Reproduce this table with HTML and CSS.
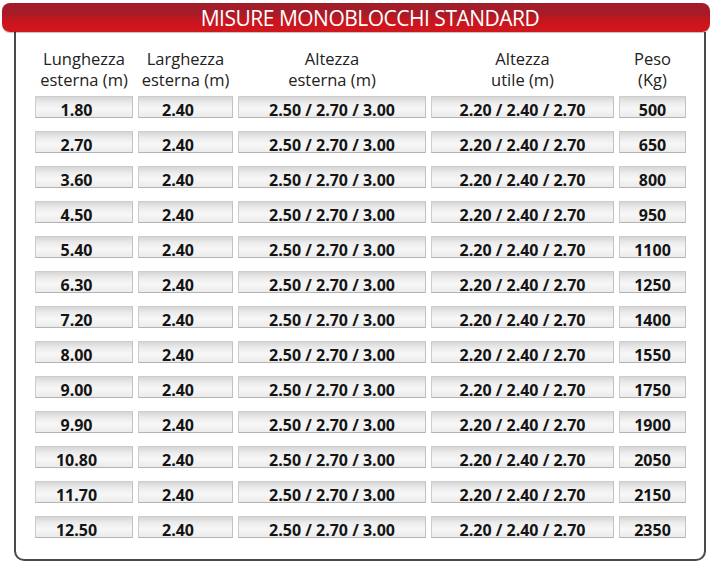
FILE: index.html
```html
<!DOCTYPE html>
<html lang="it">
<head>
<meta charset="utf-8">
<title>Misure monoblocchi standard</title>
<link rel="stylesheet" href="styles.css">
</head>
<body>
<div class="page">
  <div class="title">MISURE MONOBLOCCHI STANDARD</div>
  <div class="box">
    <div class="cols head">
      <div class="h">Lunghezza<br>esterna (m)</div>
      <div class="h">Larghezza<br>esterna (m)</div>
      <div class="h">Altezza<br>esterna (m)</div>
      <div class="h">Altezza<br>utile (m)</div>
      <div class="h">Peso<br>(Kg)</div>
    </div>
    <div class="cols rows">
      <div class="c c1">1.80</div><div class="c c2">2.40</div><div class="c">2.50 / 2.70 / 3.00</div><div class="c">2.20 / 2.40 / 2.70</div><div class="c">500</div>
      <div class="c c1">2.70</div><div class="c c2">2.40</div><div class="c">2.50 / 2.70 / 3.00</div><div class="c">2.20 / 2.40 / 2.70</div><div class="c">650</div>
      <div class="c c1">3.60</div><div class="c c2">2.40</div><div class="c">2.50 / 2.70 / 3.00</div><div class="c">2.20 / 2.40 / 2.70</div><div class="c">800</div>
      <div class="c c1">4.50</div><div class="c c2">2.40</div><div class="c">2.50 / 2.70 / 3.00</div><div class="c">2.20 / 2.40 / 2.70</div><div class="c">950</div>
      <div class="c c1">5.40</div><div class="c c2">2.40</div><div class="c">2.50 / 2.70 / 3.00</div><div class="c">2.20 / 2.40 / 2.70</div><div class="c">1100</div>
      <div class="c c1">6.30</div><div class="c c2">2.40</div><div class="c">2.50 / 2.70 / 3.00</div><div class="c">2.20 / 2.40 / 2.70</div><div class="c">1250</div>
      <div class="c c1">7.20</div><div class="c c2">2.40</div><div class="c">2.50 / 2.70 / 3.00</div><div class="c">2.20 / 2.40 / 2.70</div><div class="c">1400</div>
      <div class="c c1">8.00</div><div class="c c2">2.40</div><div class="c">2.50 / 2.70 / 3.00</div><div class="c">2.20 / 2.40 / 2.70</div><div class="c">1550</div>
      <div class="c c1">9.00</div><div class="c c2">2.40</div><div class="c">2.50 / 2.70 / 3.00</div><div class="c">2.20 / 2.40 / 2.70</div><div class="c">1750</div>
      <div class="c c1">9.90</div><div class="c c2">2.40</div><div class="c">2.50 / 2.70 / 3.00</div><div class="c">2.20 / 2.40 / 2.70</div><div class="c">1900</div>
      <div class="c c1">10.80</div><div class="c c2">2.40</div><div class="c">2.50 / 2.70 / 3.00</div><div class="c">2.20 / 2.40 / 2.70</div><div class="c">2050</div>
      <div class="c c1">11.70</div><div class="c c2">2.40</div><div class="c">2.50 / 2.70 / 3.00</div><div class="c">2.20 / 2.40 / 2.70</div><div class="c">2150</div>
      <div class="c c1">12.50</div><div class="c c2">2.40</div><div class="c">2.50 / 2.70 / 3.00</div><div class="c">2.20 / 2.40 / 2.70</div><div class="c">2350</div>
    </div>
  </div>
</div>
</body>
</html>
```
FILE: styles.css
```css
html, body {
  margin: 0;
  padding: 0;
  background: #ffffff;
}

.page {
  width: 714px;
  padding-top: 3px;
  font-family: "Open Sans", "Liberation Sans", sans-serif;
}

.title {
  position: relative;
  z-index: 1;
  margin: 0 4px 0 2px;
  height: 29px;
  line-height: 30px;
  padding-left: 28px;
  border-radius: 8px;
  background: linear-gradient(#a11d2a 0%, #a81c28 40%, #c8151e 60%, #d3161d 100%);
  box-shadow: 0 1px 1px rgba(0, 0, 0, 0.25);
  color: #ffffff;
  font-size: 21px;
  letter-spacing: -0.5px;
  text-align: center;
}

.box {
  margin: 0 8px 0 14px;
  border: 2px solid #4a4a4a;
  border-top: none;
  border-radius: 0 0 10px 10px;
  padding: 16px 18px 21px 19px;
}

.cols {
  display: grid;
  grid-template-columns: 98px 95px 188px 183px 67px;
  column-gap: 5px;
}

.head {
  margin-bottom: 6px;
}

.h {
  font-size: 16.5px;
  line-height: 21px;
  color: #222222;
  text-align: center;
  white-space: nowrap;
}

.rows {
  row-gap: 13px;
}

.c {
  box-sizing: border-box;
  height: 22px;
  padding-top: 6px;
  line-height: 15px;
  border: 1px solid #cdcdcd;
  border-bottom-color: #b4b4b4;
  border-right-color: #c2c2c2;
  background: linear-gradient(#d6d6d6 0%, #ececec 30%, #f7f7f7 60%, #ebebeb 100%);
  font-size: 16px;
  font-weight: 700;
  color: #141414;
  text-align: center;
  white-space: nowrap;
}

.c1, .c2 {
  padding-right: 15px;
}
```
